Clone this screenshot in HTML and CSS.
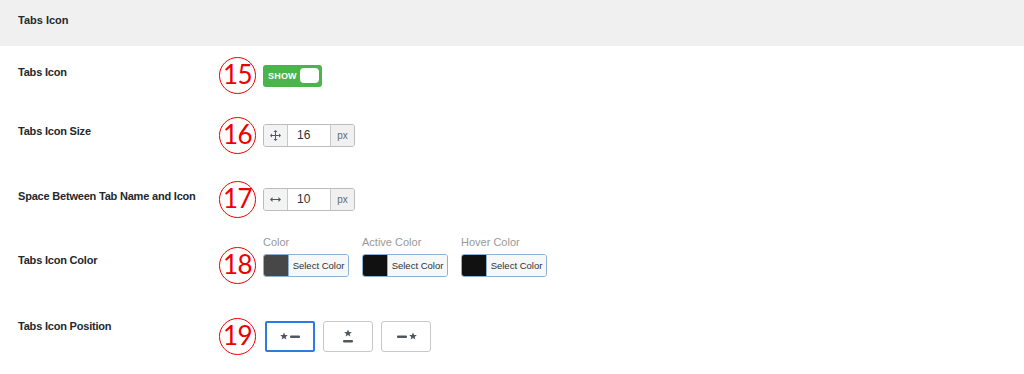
FILE: index.html
```html
<!DOCTYPE html>
<html lang="en">
<head>
  <meta charset="UTF-8" />
  <title>Tabs Icon</title>
  <link rel="stylesheet" href="styles.css">
</head>
<body>

  <div class="panel-head">Tabs Icon</div>

  <div class="row row--toggle">
    <div class="row-label">Tabs Icon</div>
    <div class="row-field">
      <span class="step">15</span>
      <span class="toggle">
        <span class="toggle-text">SHOW</span>
        <span class="toggle-knob"></span>
      </span>
    </div>
  </div>

  <div class="row row--size">
    <div class="row-label">Tabs Icon Size</div>
    <div class="row-field">
      <span class="step">16</span>
      <div class="unit-input">
        <span class="unit-icon">
          <svg width="11" height="11" viewBox="0 0 11 11" fill="#50575e">
            <rect x="5" y="1.5" width="1" height="8"/>
            <rect x="1.5" y="5" width="8" height="1"/>
            <path d="M5.5 0 L7.5 2 L3.5 2 Z"/>
            <path d="M5.5 11 L7.5 9 L3.5 9 Z"/>
            <path d="M0 5.5 L2 3.5 L2 7.5 Z"/>
            <path d="M11 5.5 L9 3.5 L9 7.5 Z"/>
          </svg>
        </span>
        <span class="unit-value">16</span>
        <span class="unit-suffix">px</span>
      </div>
    </div>
  </div>

  <div class="row row--space">
    <div class="row-label">Space Between Tab Name and Icon</div>
    <div class="row-field">
      <span class="step">17</span>
      <div class="unit-input">
        <span class="unit-icon">
          <svg width="11" height="7" viewBox="0 0 11 7" fill="#50575e">
            <rect x="1.5" y="3" width="8" height="1"/>
            <path d="M0 3.5 L2.5 1 L2.5 6 Z"/>
            <path d="M11 3.5 L8.5 1 L8.5 6 Z"/>
          </svg>
        </span>
        <span class="unit-value">10</span>
        <span class="unit-suffix">px</span>
      </div>
    </div>
  </div>

  <div class="row row--colors">
    <div class="row-label">Tabs Icon Color</div>
    <div class="row-field">
      <span class="step">18</span>
      <div class="color-group">
        <div class="color-item">
          <div class="color-label">Color</div>
          <div class="color-picker">
            <span class="color-swatch swatch-gray"></span>
            <span class="color-button">Select Color</span>
          </div>
        </div>
        <div class="color-item">
          <div class="color-label">Active Color</div>
          <div class="color-picker">
            <span class="color-swatch swatch-black"></span>
            <span class="color-button">Select Color</span>
          </div>
        </div>
        <div class="color-item">
          <div class="color-label">Hover Color</div>
          <div class="color-picker">
            <span class="color-swatch swatch-black"></span>
            <span class="color-button">Select Color</span>
          </div>
        </div>
      </div>
    </div>
  </div>

  <div class="row row--position">
    <div class="row-label">Tabs Icon Position</div>
    <div class="row-field">
      <span class="step">19</span>
      <div class="position-group">
        <button class="position-btn is-active">
          <svg width="21" height="9" viewBox="0 0 21 9" fill="#50575e">
            <path d="M4 0.5 L5.1 3 L7.8 3.1 L5.7 4.9 L6.4 7.6 L4 6.1 L1.6 7.6 L2.3 4.9 L0.2 3.1 L2.9 3 Z"/>
            <rect x="10" y="3.4" width="10" height="2.6" rx="1"/>
          </svg>
        </button>
        <button class="position-btn">
          <svg width="12" height="15" viewBox="0 0 12 15" fill="#50575e">
            <path d="M6 0.5 L7.1 3 L9.8 3.1 L7.7 4.9 L8.4 7.6 L6 6.1 L3.6 7.6 L4.3 4.9 L2.2 3.1 L4.9 3 Z"/>
            <rect x="1" y="11" width="10" height="2.6" rx="1"/>
          </svg>
        </button>
        <button class="position-btn">
          <svg width="21" height="9" viewBox="0 0 21 9" fill="#50575e">
            <rect x="1" y="3.4" width="10" height="2.6" rx="1"/>
            <path d="M17 0.5 L18.1 3 L20.8 3.1 L18.7 4.9 L19.4 7.6 L17 6.1 L14.6 7.6 L15.3 4.9 L13.2 3.1 L15.9 3 Z"/>
          </svg>
        </button>
      </div>
    </div>
  </div>

</body>
</html>
```

FILE: styles.css
```css
/* Base */
* {
  box-sizing: border-box;
}

body {
  margin: 0;
  background: #fff;
  font-family: 'Liberation Sans', Arial, sans-serif;
  color: #23282d;
  width: 1024px;
  height: 374px;
  overflow: hidden;
}

.panel-head {
  height: 46px;
  padding: 13px 18px 0;
  background: #f0f0f0;
  font-size: 11px;
  font-weight: 700;
  line-height: 15px;
}

/* Rows */
.row {
  display: flex;
  align-items: flex-start;
  padding: 11px 0 0 18px;
}

.row--toggle { height: 60px; }
.row--size { height: 64px; }
.row--space { height: 54px; }
.row--colors { height: 83px; }

.row-label {
  width: 201px;
  flex-shrink: 0;
  padding-top: 8px;
  font-size: 11px;
  font-weight: 700;
  letter-spacing: -0.2px;
  line-height: 15px;
}

.row--size .row-label { padding-top: 7px; }
.row--colors .row-label { padding-top: 18px; }
.row--position .row-label { padding-top: 1px; }

.row-field {
  display: flex;
  align-items: center;
  gap: 7px;
}

.row--colors .row-field {
  align-items: flex-end;
}

.row--colors .step {
  margin-bottom: -7px;
}

/* Step number badge */
.step {
  width: 37px;
  height: 37px;
  flex-shrink: 0;
  border: 1.5px solid #ee0000;
  border-radius: 50%;
  color: #ee0000;
  font-family: Lato, 'Liberation Sans', sans-serif;
  font-size: 26px;
  font-weight: 400;
  line-height: 33px;
  text-align: center;
  letter-spacing: -0.5px;
}

/* Toggle */
.toggle {
  display: flex;
  align-items: center;
  justify-content: space-between;
  width: 59px;
  height: 22px;
  padding: 0 3px 0 5px;
  background: #4ab54a;
  border-radius: 3px;
}

.toggle-text {
  color: #fff;
  font-size: 9px;
  font-weight: 700;
  letter-spacing: 0.2px;
}

.toggle-knob {
  width: 19px;
  height: 15px;
  background: #fff;
  border-radius: 4px;
}

/* Unit input */
.unit-input {
  display: flex;
  height: 23px;
  border: 1px solid #bcbcbc;
  border-radius: 3px;
  overflow: hidden;
}

.unit-icon {
  width: 24px;
  display: flex;
  align-items: center;
  justify-content: center;
  background: #f3f3f3;
  border-right: 1px solid #c8c8c8;
}

.unit-value {
  width: 42px;
  padding-left: 9px;
  font-size: 12px;
  line-height: 21px;
  color: #2c3338;
}

.unit-suffix {
  width: 24px;
  text-align: center;
  background: #f0f0f0;
  border-left: 1px solid #c8c8c8;
  font-size: 10px;
  line-height: 21px;
  color: #646970;
}

/* Colors */
.color-group {
  display: flex;
  gap: 13px;
}

.color-label {
  margin-bottom: 5px;
  font-size: 11px;
  line-height: 14px;
  color: #999;
}

.color-picker {
  display: flex;
  width: 86px;
  height: 23px;
  border: 1px solid #8fb0d0;
  border-radius: 3px;
  overflow: hidden;
}

.color-swatch {
  width: 25px;
  border-right: 1px solid #8fb0d0;
}

.swatch-gray { background: #474747; }
.swatch-black { background: #111; }

.color-button {
  flex: 1;
  background: #f6f7f7;
  font-size: 9.5px;
  line-height: 21px;
  text-align: center;
  color: #2c3338;
}

/* Position buttons */
.position-group {
  display: flex;
  gap: 8px;
  margin-left: 2px;
}

.position-btn {
  width: 50px;
  height: 31px;
  padding: 0;
  display: flex;
  align-items: center;
  justify-content: center;
  background: #fff;
  border: 1px solid #c8c8c8;
  border-radius: 3px;
}

.position-btn.is-active {
  border: 2px solid #2c7be0;
  border-radius: 2px;
}
```
